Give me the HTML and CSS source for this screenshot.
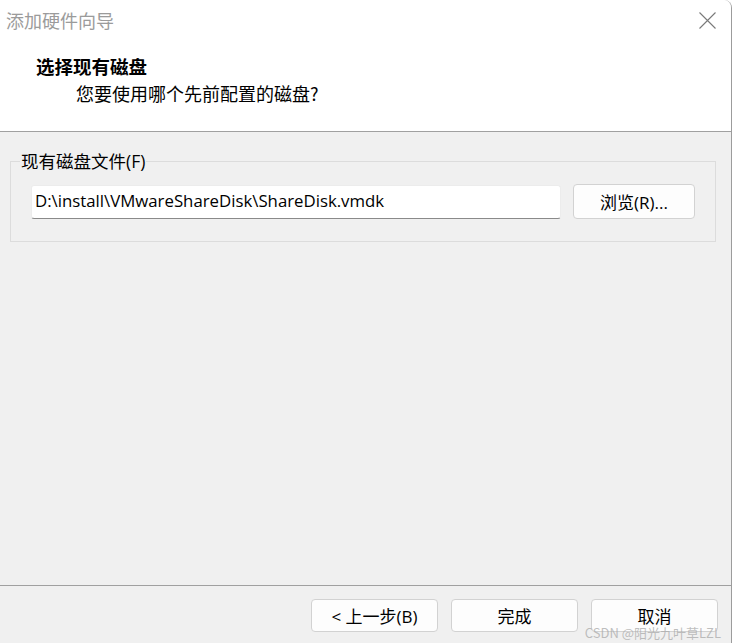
FILE: index.html
```html
<!DOCTYPE html>
<html lang="zh-CN">
<head>
<meta charset="utf-8">
<title>添加硬件向导</title>
<link rel="stylesheet" href="styles.css">
</head>
<body>
<div class="window">
  <header class="header">
    <div class="titlebar">
      <span class="title">添加硬件向导</span>
      <svg class="close" width="17" height="17" viewBox="0 0 17 17"><path d="M0.5 0.5 L16.5 16.5 M16.5 0.5 L0.5 16.5" stroke="#7a7a7a" stroke-width="1.1" fill="none"/></svg>
    </div>
    <div class="heading">选择现有磁盘</div>
    <div class="subheading">您要使用哪个先前配置的磁盘?</div>
  </header>
  <main class="content">
    <fieldset class="group">
      <legend class="legend">现有磁盘文件(F)</legend>
      <div class="row">
        <div class="input">D:\install\VMwareShareDisk\ShareDisk.vmdk</div>
        <button class="btn browse">浏览(R)...</button>
      </div>
    </fieldset>
  </main>
  <footer class="footer">
    <button class="btn action">&lt; 上一步(B)</button>
    <button class="btn action">完成</button>
    <button class="btn action">取消</button>
    <span class="watermark">CSDN @阳光九叶草LZL</span>
  </footer>
</div>
</body>
</html>
```
FILE: styles.css
```css
* { box-sizing: border-box; }
html, body { margin: 0; padding: 0; background: #ffffff; }
body {
  font-family: "Open Sans", "Noto Sans CJK SC", sans-serif;
  font-size: 17px;
  color: #000;
}
.window {
  width: 732px;
  height: 643px;
  border-right: 1px solid #9c9c9c;
  border-top-right-radius: 8px;
  overflow: hidden;
  display: flex;
  flex-direction: column;
  background: #f0f0f0;
  position: relative;
}
.header {
  height: 132px;
  background: #ffffff;
  border-bottom: 1px solid #a0a0a0;
}
.titlebar {
  height: 40px;
  display: flex;
  align-items: center;
  justify-content: space-between;
  padding: 0 15px 0 6px;
}
.title {
  font-family: "Noto Sans CJK SC", sans-serif;
  font-size: 18px;
  color: #9b9b9b;
  line-height: 24px;
}
.close { display: block; }
.heading {
  margin-top: 14px;
  padding-left: 36px;
  font-family: "Noto Sans CJK SC", sans-serif;
  font-weight: 700;
  font-size: 18.5px;
  line-height: 24px;
}
.subheading {
  margin-top: 3px;
  padding-left: 76px;
  font-family: "Noto Sans CJK SC", sans-serif;
  font-size: 18px;
  line-height: 24px;
}
.content {
  flex: 1;
  padding: 17px 15px 0 10px;
}
.group {
  margin: 0;
  border: 1px solid #dcdcdc;
  padding: 11px 19px 22px 20px;
  min-width: 0;
}
.legend {
  padding: 0 1px;
  margin-left: -11px;
  font-size: 17.5px;
  line-height: 24px;
}
.row {
  display: flex;
  align-items: center;
  gap: 12px;
}
.input {
  flex: 0 0 530px;
  height: 34px;
  background: #ffffff;
  border: 1px solid #ececec;
  border-bottom: 1px solid #8a8a8a;
  border-radius: 3px;
  padding: 0 3px;
  line-height: 30px;
  font-size: 16.8px;
  white-space: nowrap;
}
.btn {
  font-family: "Open Sans", "Noto Sans CJK SC", sans-serif;
  font-size: 17px;
  color: #000;
  background: #fdfdfd;
  border: 1px solid #d2d2d2;
  border-radius: 4px;
  padding: 0;
}
.browse {
  flex: 0 0 122px;
  height: 35px;
}
.footer {
  height: 58px;
  border-top: 1px solid #a0a0a0;
  display: flex;
  justify-content: flex-end;
  align-items: flex-start;
  gap: 13px;
  padding: 13px 13px 0 0;
  position: relative;
}
.action {
  width: 127px;
  height: 33px;
}
.watermark {
  position: absolute;
  right: 10px;
  bottom: 2px;
  font-family: "Noto Sans CJK SC", sans-serif;
  font-size: 13px;
  line-height: 16px;
  color: rgba(170, 170, 170, 0.75);
}
```
